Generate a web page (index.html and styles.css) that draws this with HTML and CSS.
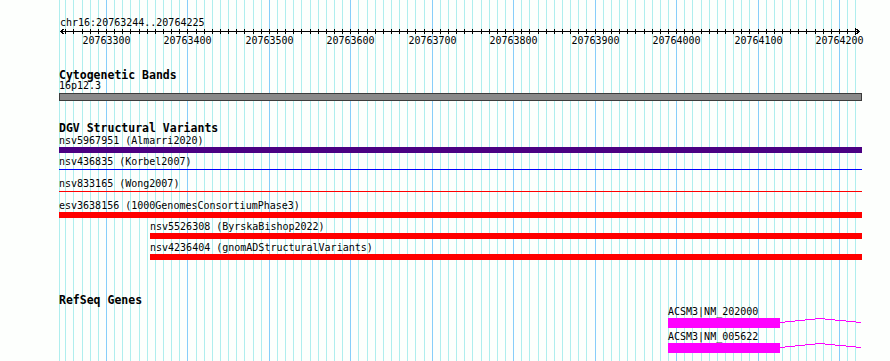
FILE: index.html
```html
<!DOCTYPE html>
<html>
<head>
    <meta charset="UTF-8">
    <meta name="viewport" content="width=device-width, initial-scale=1.0">
    <title>chr16:20763244..20764225</title>
    <link rel="stylesheet" href="styles.css">
</head>
<body>
    <div class="browser">
        <div class="grid" id="grid"></div>

        <svg class="ruler" width="890" height="50">
            <text class="ruler-location" x="60" y="26">chr16:20763244..20764225</text>
            <g class="axis" id="ticks">
                <line x1="60" y1="31.5" x2="860" y2="31.5"></line>
                <polyline points="64.5,28.5 60.5,31.5 64.5,34.5"></polyline>
                <polyline points="855.5,28.5 859.5,31.5 855.5,34.5"></polyline>
            </g>
            <g class="ruler-labels">
                <text x="106.5" y="44">20763300</text>
                <text x="187.5" y="44">20763400</text>
                <text x="269.5" y="44">20763500</text>
                <text x="350.5" y="44">20763600</text>
                <text x="432.5" y="44">20763700</text>
                <text x="513.5" y="44">20763800</text>
                <text x="595.5" y="44">20763900</text>
                <text x="676.5" y="44">20764000</text>
                <text x="758.5" y="44">20764100</text>
                <text x="839.5" y="44">20764200</text>
            </g>
        </svg>

        <section class="track track-bands">
            <div class="track-label">Cytogenetic Bands</div>
            <div class="feature-name">16p12.3</div>
            <div class="band"></div>
        </section>

        <section class="track track-dgv">
            <div class="track-label">DGV Structural Variants</div>
            <div class="sv">
                <div class="feature-name">nsv5967951 (Almarri2020)</div>
                <div class="sv-bar sv-indigo"></div>
            </div>
            <div class="sv">
                <div class="feature-name">nsv436835 (Korbel2007)</div>
                <div class="sv-bar"><div class="sv-line sv-blue"></div></div>
            </div>
            <div class="sv">
                <div class="feature-name">nsv833165 (Wong2007)</div>
                <div class="sv-bar"><div class="sv-line sv-red"></div></div>
            </div>
            <div class="sv">
                <div class="feature-name">esv3638156 (1000GenomesConsortiumPhase3)</div>
                <div class="sv-bar sv-red"></div>
            </div>
            <div class="sv" style="margin-left: 91px;">
                <div class="feature-name">nsv5526308 (ByrskaBishop2022)</div>
                <div class="sv-bar sv-red"></div>
            </div>
            <div class="sv" style="margin-left: 91px;">
                <div class="feature-name">nsv4236404 (gnomADStructuralVariants)</div>
                <div class="sv-bar sv-red"></div>
            </div>
        </section>

        <section class="track track-genes">
            <div class="track-label">RefSeq Genes</div>
            <div class="gene" style="margin-left: 609px;">
                <div class="feature-name">ACSM3|NM_202000</div>
                <div class="gene-model">
                    <div class="exon" style="width: 112px;"></div>
                    <svg class="intron" width="82" height="10"><polyline points="0,4.5 40,0.5 81,4.5"></polyline></svg>
                </div>
            </div>
            <div class="gene" style="margin-left: 609px;">
                <div class="feature-name">ACSM3|NM_005622</div>
                <div class="gene-model">
                    <div class="exon" style="width: 112px;"></div>
                    <svg class="intron" width="82" height="10"><polyline points="0,4.5 40,0.5 81,4.5"></polyline></svg>
                </div>
            </div>
        </section>
    </div>

    <script src="script.js"></script>
</body>
</html>
```

FILE: styles.css
```css
body {
    margin: 0;
    background-color: #fdfffd;
    color: #000;
    font-family: "DejaVu Sans Mono", "Liberation Mono", monospace;
    font-size: 10px;
    line-height: 10px;
}

.browser {
    position: relative;
    width: 890px;
    height: 361px;
    overflow: hidden;
}

/* vertical guides behind all tracks */
.grid {
    position: absolute;
    top: 0;
    left: 0;
    right: 0;
    bottom: 0;
}

.gridline {
    position: absolute;
    top: 0;
    bottom: 0;
    width: 1px;
    background-color: #afeeee;
}

.gridline-major {
    background-color: #87cefa;
}

.ruler {
    display: block;
    position: relative;
}

.ruler text {
    font-family: "DejaVu Sans Mono", "Liberation Mono", monospace;
    font-size: 10px;
    fill: #000;
}

.ruler-labels text {
    text-anchor: middle;
}

.axis line,
.axis polyline {
    stroke: #000;
    stroke-width: 1;
    fill: none;
    shape-rendering: crispEdges;
}

.track {
    position: relative;
    padding-left: 59px;
}

.track-label {
    font-weight: bold;
    font-size: 11.5px;
    line-height: 12px;
}

.feature-name {
    white-space: nowrap;
}

/* cytogenetic bands */
.track-bands {
    margin-top: 19px;
}

.band {
    width: 801px;
    height: 6px;
    margin-top: 2px;
    background-color: #8a8a8a;
    border: 1px solid #3c3c3c;
}

/* structural variants */
.track-dgv {
    margin-top: 21px;
}

.track-dgv .track-label {
    margin-bottom: 2px;
}

.sv {
    margin-bottom: 4px;
}

.sv-bar {
    height: 6px;
    margin-top: 1px;
    margin-right: 28px;
}

.sv-line {
    height: 1px;
    margin-top: 2px;
}

.sv-indigo {
    background-color: #4b0082;
}

.sv-blue {
    background-color: #0000ff;
}

.sv-red {
    background-color: #ff0000;
}

/* genes */
.track-genes {
    margin-top: 34px;
}

.track-genes .track-label {
    margin-bottom: 1px;
}

.gene {
    margin-bottom: 4px;
}

.gene .feature-name {
    position: relative;
}

.gene-model {
    display: flex;
    height: 10px;
    margin-top: 1px;
}

.exon {
    background-color: #ff00ff;
}

.intron {
    display: block;
}

.intron polyline {
    stroke: #ff00ff;
    stroke-width: 1;
    fill: none;
    shape-rendering: crispEdges;
}
```

FILE: script.js
```js
const grid = document.getElementById('grid');
const ticks = document.getElementById('ticks');
const SVG_NS = 'http://www.w3.org/2000/svg';

const VIEW_END = 20764225;
const SCALE = 0.8144; // px per bp

function bpToX(bp) {
    return Math.round(106 + (bp - 20763300) * SCALE);
}

function addGridline(x, major) {
    const line = document.createElement('div');
    line.className = major ? 'gridline gridline-major' : 'gridline';
    line.style.left = x + 'px';
    grid.appendChild(line);
}

// left edge of the view
addGridline(59, false);

for (let bp = 20763250; bp <= VIEW_END; bp += 10) {
    const x = bpToX(bp);
    addGridline(x, bp % 100 === 0);

    const tick = document.createElementNS(SVG_NS, 'line');
    tick.setAttribute('x1', x + 0.5);
    tick.setAttribute('x2', x + 0.5);
    tick.setAttribute('y1', 29);
    tick.setAttribute('y2', 34);
    ticks.appendChild(tick);
}
```
